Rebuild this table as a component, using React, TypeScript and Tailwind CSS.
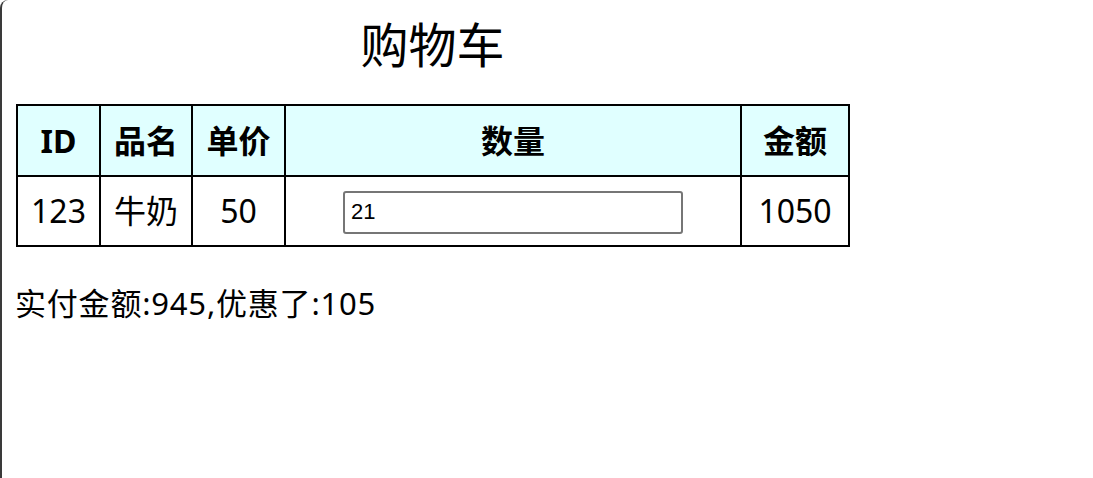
import React from "react";

export default function App() {
  const font = { fontFamily: '"Noto Sans", "Noto Sans CJK SC", sans-serif' };
  const td = "border-2 border-black text-[32px] text-center p-0 leading-none";
  return (
    <div
      className="min-h-screen w-full bg-white border-l-2 border-[#3a3a3a] rounded-tl-[8px] text-black"
      style={font}
    >
      <div className="pl-[13px]">
        <div className="inline-block">
          <div className="text-center text-[48px] leading-[48px] pt-[21px] pb-[35px] font-normal">购物车</div>
          <table className="border-collapse table-fixed w-[832px] ml-[1px]">
            <colgroup>
              <col className="w-[83px]" />
              <col className="w-[92px]" />
              <col className="w-[93px]" />
              <col className="w-[456px]" />
              <col className="w-[108px]" />
            </colgroup>
            <thead>
              <tr className="bg-[#e0ffff] h-[71px]">
                {["ID", "品名", "单价", "数量", "金额"].map((h) => (
                  <th key={h} className="border-2 border-black text-[32px] font-bold text-center p-0 leading-none">
                    {h}
                  </th>
                ))}
              </tr>
            </thead>
            <tbody>
              <tr className="h-[70px]">
                <td className={td}>123</td>
                <td className={td}>牛奶</td>
                <td className={td}>50</td>
                <td className="border-2 border-black text-center p-0">
                  <input
                    type="text"
                    defaultValue="21"
                    className="w-[340px] h-[43px] border-2 border-[#767676] rounded-[3px] px-[6px] text-[22px] text-black outline-none align-middle mt-[2px]"
                    style={{ fontFamily: '"Liberation Sans", Arial, sans-serif' }}
                  />
                </td>
                <td className={td}>1050</td>
              </tr>
            </tbody>
          </table>
        </div>
        <div className="text-[31px] leading-[40px] mt-[36px] tracking-[0.8px]">实付金额:945,优惠了:105</div>
      </div>
    </div>
  );
}
